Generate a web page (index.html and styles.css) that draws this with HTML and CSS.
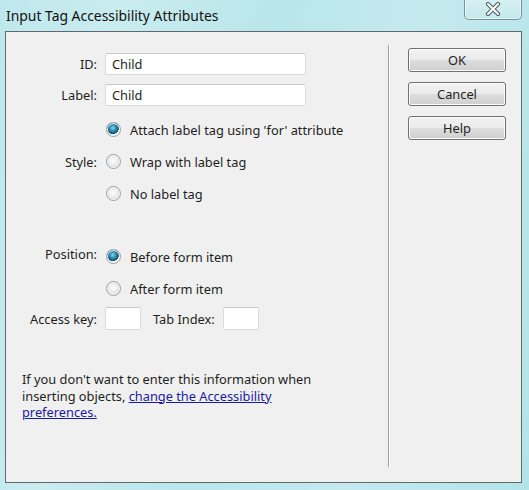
FILE: index.html
```html
<!DOCTYPE html>
<html>
<head>
<meta charset="utf-8">
<link rel="stylesheet" href="styles.css">
</head>
<body>
<div class="window">
  <div class="titlebar">
    <span class="title">Input Tag Accessibility Attributes</span>
    <div class="close">
      <svg width="16" height="14" viewBox="0 0 16 14">
        <path d="M3 2 L13 12 M13 2 L3 12" stroke="#4a5a60" stroke-width="4.2" stroke-linecap="round"/>
        <path d="M3 2 L13 12 M13 2 L3 12" stroke="#ffffff" stroke-width="2.2" stroke-linecap="round"/>
      </svg>
    </div>
  </div>
  <div class="panel">
    <div class="main">
      <div class="row row-id">
        <span class="lbl">ID:</span>
        <span class="field wide">Child</span>
      </div>
      <div class="row row-label">
        <span class="lbl">Label:</span>
        <span class="field wide">Child</span>
      </div>
      <div class="row row-radio first">
        <span class="lbl"></span>
        <span class="radio checked"></span><span class="opt">Attach label tag using 'for' attribute</span>
      </div>
      <div class="row row-radio">
        <span class="lbl">Style:</span>
        <span class="radio"></span><span class="opt">Wrap with label tag</span>
      </div>
      <div class="row row-radio">
        <span class="lbl"></span>
        <span class="radio"></span><span class="opt">No label tag</span>
      </div>
      <div class="row row-radio pos">
        <span class="lbl up">Position:</span>
        <span class="radio checked"></span><span class="opt">Before form item</span>
      </div>
      <div class="row row-radio">
        <span class="lbl"></span>
        <span class="radio"></span><span class="opt">After form item</span>
      </div>
      <div class="row row-keys">
        <span class="lbl">Access key:</span>
        <span class="field small"></span>
        <span class="lbl2">Tab Index:</span>
        <span class="field small"></span>
      </div>
      <p class="note">If you don't want to enter this information when<br>inserting objects, <a href="#">change the Accessibility<br>preferences.</a></p>
    </div>
    <div class="sep"></div>
    <div class="buttons">
      <button class="btn">OK</button>
      <button class="btn">Cancel</button>
      <button class="btn">Help</button>
    </div>
  </div>
</div>
</body>
</html>
```
FILE: styles.css
```css
html, body {
  margin: 0;
  padding: 0;
}
body {
  width: 529px;
  height: 490px;
  overflow: hidden;
  font-family: "Noto Sans", "Open Sans", sans-serif;
  font-size: 12.8px;
  color: #1e1e1e;
}
.window {
  width: 529px;
  height: 490px;
  background: linear-gradient(100deg, #bfe8ec 0%, #c9ecef 20%, #b9e6ea 45%, #c4eaee 70%, #b3e3e8 100%);
  position: relative;
}
.titlebar {
  height: 31px;
  display: flex;
  align-items: flex-start;
}
.title {
  font-size: 13.9px;
  margin: 6px 0 0 6px;
  color: #111;
}
.close {
  position: absolute;
  left: 464px;
  top: -1px;
  width: 56px;
  height: 20px;
  border: 1px solid #7d9096;
  border-top: none;
  border-radius: 0 0 5px 5px;
  background: linear-gradient(#d6f1f3, #c3e9ec);
  display: flex;
  align-items: center;
  justify-content: center;
  box-shadow: inset 0 0 0 1px rgba(255,255,255,0.5);
}
.panel {
  margin-left: 5px;
  width: 515px;
  height: 450px;
  border: 1px solid #5e6a6e;
  background: #f0f0f0;
  display: flex;
}
.main {
  width: 382px;
  padding-top: 21px;
  display: flex;
  flex-direction: column;
}
.row {
  display: flex;
  align-items: center;
}
.row-id, .row-label { height: 22px; }
.row-label { margin-top: 9px; }
.row-radio { height: 32px; }
.row-radio.first { margin-top: 8px; }
.row-radio.pos { margin-top: 31px; }
.row-keys { height: 23px; margin-top: 2px; }
.lbl {
  width: 91px;
  text-align: right;
  margin-right: 8px;
  flex: none;
  white-space: nowrap;
}
.lbl.up {
  position: relative;
  top: -3px;
}
.field {
  box-sizing: border-box;
  height: 22px;
  background: #fff;
  border: 1px solid #d9dcde;
  border-top-color: #c7cacc;
  border-radius: 2px;
  padding: 0 6px;
  line-height: 20px;
}
.field.wide { width: 201px; }
.field.small { width: 36px; height: 23px; }
.lbl2 { margin: 0 8px 0 12px; }
.radio {
  box-sizing: border-box;
  width: 15px;
  height: 15px;
  border-radius: 50%;
  border: 1px solid #9aa0a4;
  background: radial-gradient(circle at 50% 45%, #ffffff 0%, #e6e6e6 55%, #cfd2d4 100%);
  flex: none;
  margin-left: 1px;
  margin-right: 9px;
  position: relative;
  top: -1px;
  box-shadow: inset 0 0 0 1px #f8f8f8;
}
.radio.checked {
  background: radial-gradient(circle at 45% 38%, #8ad3ea 0%, #2a8bb0 30%, #0f4e6c 55%, #ffffff 58%, #ffffff 72%, #d8dadc 100%);
}
.opt { white-space: nowrap; }
.note {
  margin: 41px 0 0 16px;
  line-height: 16.5px;
}
.note a {
  color: #1a1aa6;
  text-decoration: underline;
}
.sep {
  width: 1px;
  margin-top: 13px;
  height: 422px;
  background: #a0a0a0;
  border-right: 1px solid #ffffff;
}
.buttons {
  display: flex;
  flex-direction: column;
  padding: 16px 0 0 18px;
  gap: 10px;
}
.btn {
  box-sizing: border-box;
  width: 98px;
  height: 24px;
  border: 1px solid #707070;
  border-radius: 3px;
  background: linear-gradient(#f2f2f2 0%, #ebebeb 50%, #dddddd 51%, #cfcfcf 100%);
  box-shadow: inset 0 0 0 1px #fcfcfc;
  font-family: "Noto Sans", "Open Sans", sans-serif;
  font-size: 12.8px;
  color: #1e1e1e;
  padding: 0;
}
```
